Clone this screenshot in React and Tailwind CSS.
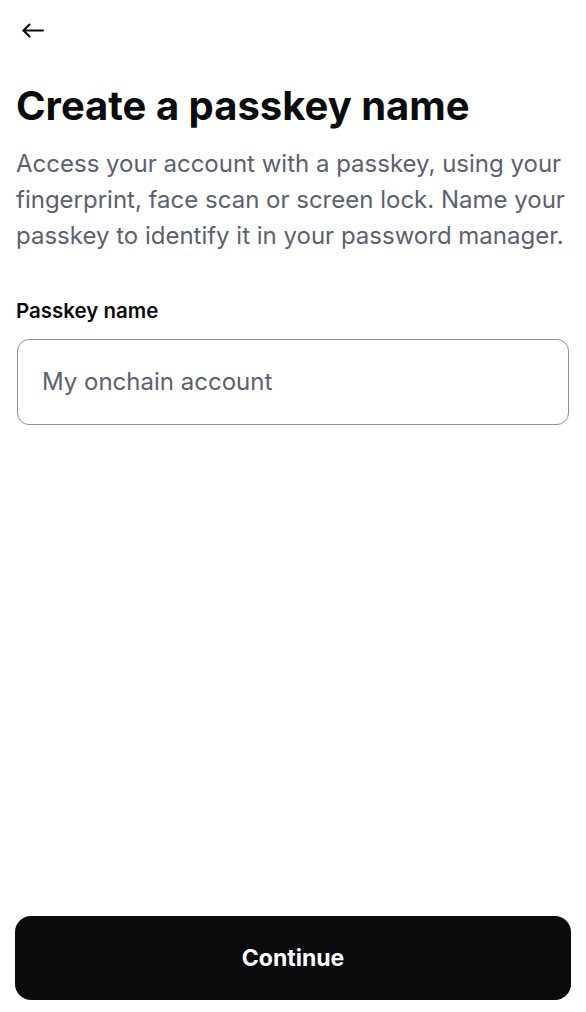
export default function App() {
  return (
    <div className="h-[1012px] w-full bg-white flex flex-col font-['Inter',sans-serif] text-[#0a0b0d]">
      <div className="pt-[19px] pl-[21px]">
        <button className="w-[24px] h-[24px] flex items-center justify-center">
          <svg width="24" height="24" viewBox="0 0 24 24" fill="none" stroke="currentColor" strokeWidth="2" strokeLinecap="round" strokeLinejoin="round">
            <path d="M2.5 11.5H22" />
            <path d="M8.5 5.5L2.5 11.5L8.5 17.5" />
          </svg>
        </button>
      </div>

      <div className="px-4 pt-[39px]">
        <h1 className="text-[40px] leading-[48px] font-bold">Create a passkey name</h1>
        <p className="mt-[16px] text-[24px] leading-[36px] text-[#5b616e]">
          Access your account with a passkey, using your fingerprint, face scan or screen lock. Name your passkey to identify it in your password manager.
        </p>

        <label className="block mt-[44px] text-[20.5px] leading-[26px] font-semibold">Passkey name</label>
        <div className="mt-[15px] ml-px mr-px h-[86px] rounded-[12px] border border-[#8a8f98] flex items-center px-[24px]">
          <input
            className="w-full outline-none bg-transparent text-[24px] placeholder:text-[#5b616e]"
            placeholder="My onchain account"
          />
        </div>
      </div>

      <div className="flex-1" />

      <div className="px-[15px] pb-[12px]">
        <button className="w-full h-[84px] rounded-[16px] bg-[#0a0b0d] text-white text-[23px] font-bold">
          Continue
        </button>
      </div>
    </div>
  )
}
